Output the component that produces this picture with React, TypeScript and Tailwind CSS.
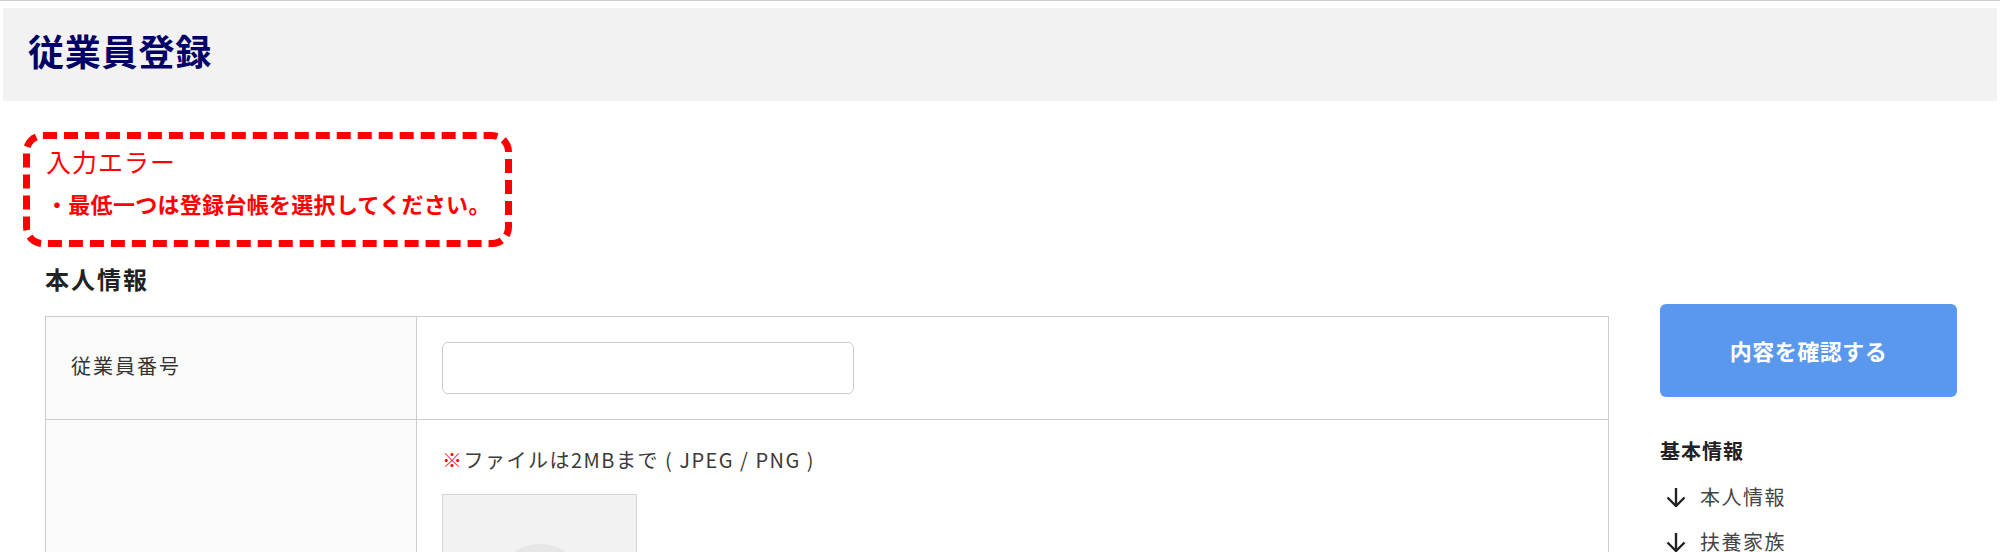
import React from 'react';

function DownArrow() {
  return (
    <svg width="20" height="20" viewBox="0 0 20 20" fill="none" stroke="#222" strokeWidth={2.4}>
      <path d="M10 1v18" />
      <path d="M1.5 10.5l8.5 8.5 8.5-8.5" />
    </svg>
  );
}

function ErrorBox() {
  return (
    <div className="ml-[23px] mt-[31px] w-[489px] h-[115px] border-[7px] border-dashed border-[#ff0000] rounded-[20px] pl-[16px] pt-[5px] text-[#ff0000]">
      <p className="text-[25px] leading-[34px] tracking-[1px]">入力エラー</p>
      <p className="mt-[10px] text-[22px] leading-[30px] font-bold tracking-[0.3px]">
        ・最低一つは登録台帳を選択してください。
      </p>
    </div>
  );
}

function ProfileTable() {
  return (
    <div className="border border-[#ccc]">
      <div className="flex border-b border-[#ccc]">
        <div className="w-[371px] shrink-0 bg-[#fafafa] border-r border-[#ccc] flex items-center pl-[25px] pb-[5px]">
          <span className="text-[20px] leading-[30px] tracking-[2px] text-[#333]">従業員番号</span>
        </div>
        <div className="flex-1 px-[25px] py-[25px]">
          <input
            type="text"
            className="block w-[412px] h-[52px] border border-[#ccc] rounded-[6px] bg-white outline-none px-3"
          />
        </div>
      </div>
      <div className="flex">
        <div className="w-[371px] shrink-0 bg-[#fafafa] border-r border-[#ccc]" />
        <div className="flex-1 px-[25px] pt-[25px] pb-[25px]">
          <p className="text-[20px] leading-[30px] tracking-[1.5px] text-[#3a3a3a]">
            <span className="text-[#ff0000] font-bold">※</span>ファイルは2MBまで ( JPEG / PNG )
          </p>
          <div className="mt-[19px] w-[195px] h-[195px] bg-[#f2f2f2] border border-[#d6d6d6] flex items-center justify-center">
            <div className="w-[96px] h-[96px] rounded-full bg-[#e6e6e6]" />
          </div>
        </div>
      </div>
    </div>
  );
}

function Sidebar() {
  const links = ['本人情報', '扶養家族'];
  return (
    <div className="w-[297px] shrink-0 pt-[41px]">
      <button
        type="button"
        className="w-full h-[93px] rounded-[6px] bg-[#5a98ee] text-white text-[22px] font-bold tracking-[0.5px]"
      >
        内容を確認する
      </button>
      <p className="mt-[39px] text-[20px] leading-[30px] font-bold tracking-[1px] text-[#222]">基本情報</p>
      <ul className="mt-[16px] flex flex-col gap-[15px]">
        {links.map((label) => (
          <li key={label} className="flex items-center gap-[14px] pl-[6px] h-[30px]">
            <DownArrow />
            <span className="text-[20px] leading-[30px] tracking-[1.5px] text-[#444]">{label}</span>
          </li>
        ))}
      </ul>
    </div>
  );
}

export default function App() {
  return (
    <div className="h-[552px] overflow-hidden bg-white border-t border-[#ccc] font-['Noto_Sans_CJK_JP','Noto_Sans',sans-serif]">
      <header className="mx-[3px] mt-[7px] h-[93px] bg-[#f2f2f2] pl-[25px] pt-[22px]">
        <h1 className="text-[36px] leading-[40px] font-bold text-[#000066] tracking-[0.8px]">従業員登録</h1>
      </header>

      <ErrorBox />

      <div className="flex gap-[51px] pl-[45px] pr-[43px] mt-[16px]">
        <div className="flex-1">
          <h2 className="text-[24px] leading-[32px] font-bold tracking-[2px] text-[#222] mb-[21px]">本人情報</h2>
          <ProfileTable />
        </div>
        <Sidebar />
      </div>
    </div>
  );
}
